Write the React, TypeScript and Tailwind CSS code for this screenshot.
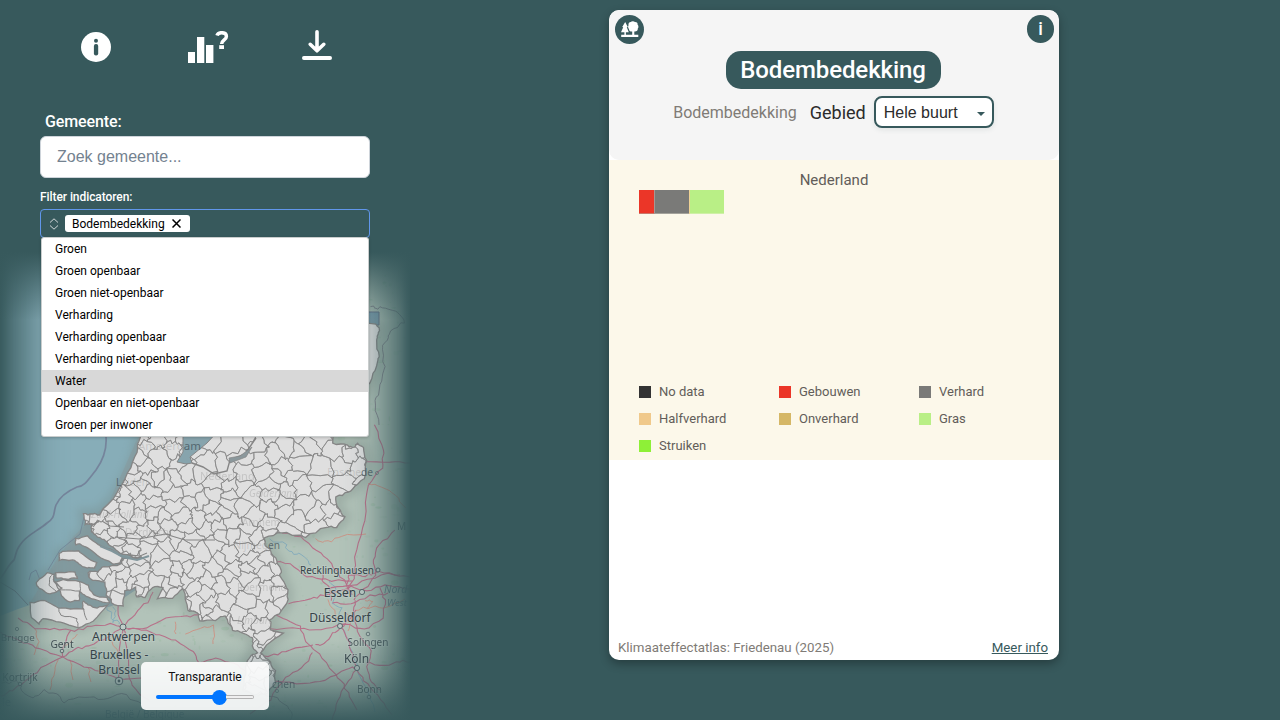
import React from "react";

type Pt = [number, number];

const MAINLAND: Pt[] = [
  [139, 425], [140, 437], [137, 452], [128, 473], [117, 493], [99, 515], [93, 514], [84, 514], [85, 524], [91, 525], [100, 522],
  [92, 524], [91, 532], [98, 537], [105, 540], [111, 547], [120, 553], [134, 557], [143, 558], [123, 558], [122, 564],
  [103, 567], [98, 571], [87, 572], [92, 580], [105, 582], [107, 595], [112, 603], [123, 607], [125, 591],
  [135, 588], [137, 597], [145, 597], [153, 587], [163, 587], [158, 598], [172, 598], [183, 589],
  [188, 610], [197, 613], [200, 621], [215, 620], [225, 615], [233, 630], [243, 633], [253, 638],
  [252, 645], [257, 652], [248, 658], [246, 668], [243, 690], [255, 696], [268, 693], [275, 683], [275, 670], [268, 660],
  [260, 653], [267, 645], [283, 633], [271, 630], [270, 620], [280, 613], [288, 600], [287, 587], [280, 576], [281, 570],
  [278, 563], [272, 553], [266, 545], [264, 538], [281, 532], [305, 537], [325, 527], [337, 527], [345, 517], [338, 508],
  [335, 497], [348, 492], [357, 485], [365, 478], [366, 460], [363, 447], [358, 443], [355, 448], [347, 445], [333, 443], [332, 425],
];
const ISLANDS: Pt[][] = [
  [[75, 539], [87, 536], [98, 545], [110, 549], [122, 557], [120, 563], [112, 564], [97, 555], [88, 548], [80, 544], [76, 545]],
  [[59, 554], [63, 551], [78, 551], [86, 557], [97, 563], [94, 568], [87, 568], [79, 564], [73, 560], [59, 560]],
  [[36, 582], [47, 573], [54, 574], [54, 582], [62, 588], [57, 592], [48, 594], [39, 588]],
  [[55, 573], [75, 572], [77, 578], [65, 579], [57, 578]],
  [[54, 582], [63, 580], [80, 581], [88, 586], [93, 595], [107, 598], [109, 603], [95, 600], [86, 596], [80, 592], [79, 600], [70, 602], [61, 596], [60, 590]],
  [[30, 603], [45, 600], [58, 608], [83, 609], [83, 601], [88, 605], [97, 608], [108, 605], [93, 621], [78, 628], [60, 622], [43, 618], [39, 624], [31, 617]],
];
const NORTHEAST: Pt[] = [[350, 322], [376, 324], [379, 328], [378, 336], [376, 342], [379, 355], [378, 362], [372, 378], [362, 395]];
const ISLAND_SPLITS: Pt[][] = [
  [[58, 608], [61, 615], [77, 618], [78, 628]], [[83, 609], [87, 620]], [[60, 590], [80, 591]], [[80, 581], [80, 592]],
  [[51, 575], [49, 585], [57, 592]],
];

function wobble([x, y]: Pt): Pt {
  return [
    x + 1.7 * Math.sin(y * 0.5 + x * 0.2) + 1.1 * Math.sin(y * 1.4 - x * 1.1),
    y + 1.7 * Math.sin(x * 0.55 - y * 0.3) + 1.1 * Math.sin(x * 1.3 + y * 1.1),
  ];
}

function rough(poly: Pt[], closed = true, amount = 0.6): string {
  const out: Pt[] = [];
  poly.forEach((a, i) => {
    if (!closed && i === poly.length - 1) {
      out.push(a);
      return;
    }
    const b = poly[(i + 1) % poly.length];
    for (let k = 0; k < 4; k++) {
      const p: Pt = [a[0] + ((b[0] - a[0]) * k) / 4, a[1] + ((b[1] - a[1]) * k) / 4];
      const w = wobble(p);
      out.push([p[0] + (w[0] - p[0]) * amount, p[1] + (w[1] - p[1]) * amount]);
    }
  });
  return "M" + out.map((p) => `${p[0].toFixed(1)} ${p[1].toFixed(1)}`).join("L") + (closed ? "Z" : "");
}

function random(seed: number) {
  let s = seed;
  return () => {
    s = (s * 16807) % 2147483647;
    return s / 2147483647;
  };
}

/** Municipality cells: a Voronoi partition whose density is higher in the west. */
function municipalities(): string {
  const rnd = random(4271);
  const seeds: Pt[] = [];
  for (let n = 0; n < 2200; n++) {
    const x = 75 + rnd() * 305;
    const y = 420 + rnd() * 285;
    let gap = 9.5;
    if (x > 235 && y < 535) gap = 13.5;
    if (x < 150 && y < 535) gap = 7;
    if (y > 555 && x > 195) gap = 10.5;
    gap *= 0.65 + rnd() * 1.15;
    if (x > 188 && x < 245 && y < 468) gap = 26;
    if (seeds.every((s) => Math.hypot((s[0] - x) * 0.9, (s[1] - y) * 1.25) > gap)) seeds.push([x, y]);
  }
  return seeds
    .map((s) => {
      let poly: Pt[] = [[s[0] - 40, s[1] - 40], [s[0] + 40, s[1] - 40], [s[0] + 40, s[1] + 40], [s[0] - 40, s[1] + 40]];
      for (const t of seeds) {
        if (t === s || Math.hypot(t[0] - s[0], t[1] - s[1]) > 80) continue;
        const nx = t[0] - s[0];
        const ny = t[1] - s[1];
        const c = (nx * (t[0] + s[0]) + ny * (t[1] + s[1])) / 2;
        const next: Pt[] = [];
        poly.forEach((a, i) => {
          const b = poly[(i + 1) % poly.length];
          const da = a[0] * nx + a[1] * ny - c;
          const db = b[0] * nx + b[1] * ny - c;
          if (da <= 0) next.push(a);
          if (da * db < 0) {
            const k = da / (da - db);
            next.push([a[0] + (b[0] - a[0]) * k, a[1] + (b[1] - a[1]) * k]);
          }
        });
        poly = next;
      }
      return rough(poly, true, 0.95);
    })
    .join("");
}

const MAIN_PATH = rough(MAINLAND, true, 0.35) + rough(NORTHEAST, true, 0.3);
const COUNTRY = MAIN_PATH + ISLANDS.map((p) => rough(p, true, 0.25)).join("");
const CELLS = municipalities();

const PATCHES = (() => {
  const rnd = random(977);
  return Array.from({ length: 620 }, () => ({
    x: rnd() * 410,
    y: 250 + rnd() * 470,
    rx: 0.8 + rnd() * rnd() * 4,
    ry: 0.6 + rnd() * rnd() * 2.6,
    o: 0.12 + rnd() * 0.3,
  }));
})();

const MOTORWAYS: Pt[][] = [
  [[123, 627], [110, 624], [92, 626], [75, 631], [55, 629], [35, 628], [18, 618]],
  [[123, 627], [108, 637], [88, 646], [75, 649], [62, 657], [45, 665], [30, 678], [12, 690], [0, 696]],
  [[62, 657], [40, 649], [24, 643], [0, 632]],
  [[62, 657], [85, 667], [105, 673], [119, 680], [142, 678]],
  [[62, 657], [65, 643], [71, 630]],
  [[123, 627], [119, 648], [118, 680]],
  [[123, 627], [128, 652], [129, 680], [137, 692], [150, 702]],
  [[123, 627], [142, 630], [160, 635], [181, 643], [193, 652], [199, 663]],
  [[123, 627], [134, 614], [148, 602], [153, 592]],
  [[123, 627], [117, 610], [119, 603]],
  [[128, 629], [147, 628], [166, 618], [187, 616], [200, 615]],
  [[199, 663], [215, 658], [238, 665], [250, 675], [262, 693]],
  [[281, 532], [300, 537], [316, 550], [331, 563], [344, 580], [352, 595]],
  [[271, 560], [290, 564], [308, 577], [325, 580], [352, 581]],
  [[375, 425], [383, 450], [382, 468], [368, 485], [365, 520], [356, 550], [354, 578], [345, 596]],
  [[365, 462], [390, 462], [410, 463]],
  [[396, 530], [378, 545], [373, 560], [376, 575], [364, 590], [354, 600]],
  [[288, 603], [310, 599], [325, 595], [344, 590], [362, 582], [388, 574], [410, 577]],
  [[269, 613], [282, 618], [300, 626], [306, 641], [315, 650], [330, 668], [341, 680], [350, 696], [357, 710]],
  [[270, 629], [300, 628], [320, 630], [345, 624], [365, 630], [383, 618], [385, 600], [380, 588]],
  [[315, 645], [325, 644], [332, 634], [344, 626], [356, 610]],
  [[250, 657], [275, 655], [290, 650], [313, 645]],
  [[313, 652], [302, 668], [285, 678], [270, 699], [250, 714]],
  [[275, 681], [304, 684], [325, 680], [346, 669], [357, 667]],
  [[331, 600], [330, 590], [322, 580], [323, 573]],
  [[341, 626], [348, 640], [352, 655], [357, 669], [367, 684], [381, 700], [392, 715]],
  [[355, 600], [353, 615], [360, 636], [372, 651], [367, 666], [371, 682], [380, 690]],
  [[357, 669], [345, 685], [338, 700], [332, 720]],
  [[366, 663], [384, 666], [399, 661], [410, 662]],
  [[325, 588], [350, 586], [367, 591], [386, 585], [410, 589]],
  [[333, 602], [350, 604], [369, 596], [388, 593]],
  [[347, 585], [349, 575], [365, 576], [379, 572], [400, 575]],
];
const ROADS: Pt[][] = [
  [[35, 628], [38, 642], [34, 655]], [[58, 660], [53, 675], [50, 690]], [[71, 660], [73, 680]],
  [[88, 668], [91, 682]], [[110, 637], [118, 653]], [[175, 622], [176, 634]], [[185, 634], [200, 628], [214, 626], [213, 644]],
  [[315, 540], [328, 542], [342, 536], [366, 534]], [[78, 634], [65, 646]], [[250, 657], [260, 652]],
  [[345, 610], [352, 620], [348, 631]], [[327, 600], [333, 607], [337, 619]], [[365, 600], [374, 602], [367, 608]],
  [[356, 610], [371, 607], [386, 608], [405, 599]], [[367, 483], [382, 486], [395, 495], [406, 508]],
];
const RIVERS: Pt[][] = [
  [[271, 540], [286, 545], [290, 552], [303, 555], [311, 565]],
  [[329, 578], [335, 588], [332, 602], [340, 609], [339, 624], [347, 636], [351, 648], [357, 667], [366, 688], [375, 712]],
  [[107, 606], [113, 618], [119, 624]], [[112, 609], [117, 616], [112, 622]],
];
const BORDERS: Pt[][] = [
  [[0, 683], [18, 681], [22, 691], [34, 698], [43, 691], [57, 694], [64, 702], [84, 696], [104, 700], [121, 693], [142, 704]],
  [[265, 693], [280, 700], [292, 712], [290, 720]],
  [[370, 307], [378, 308], [389, 308], [400, 315], [405, 322], [391, 331], [386, 340], [382, 350], [384, 370], [379, 390], [375, 405], [379, 425]],
];
const SEA_LIMIT = "M106 437C107 449 103 460 96 470C88 480 84 487 77 487C70 490 60 496 56 505C53 513 56 517 47 523C38 531 26 535 20 545C16 550 16 555 14 560C8 565 7 570 0 579";

interface Place {
  name: string;
  x: number;
  y: number;
  size: number;
  opacity?: number;
  dot?: Pt;
  r?: number;
}
const PLACES: Place[] = [
  { name: "Antwerpen", x: 123.5, y: 641, size: 12.2, dot: [123, 627], r: 3 },
  { name: "Bruxelles -", x: 119, y: 658.5, size: 12 },
  { name: "Brussel", x: 119, y: 674, size: 12, dot: [119, 681], r: 3.8 },
  { name: "Gent", x: 62, y: 647.5, size: 10.2, opacity: 0.9, dot: [62, 651], r: 1.8 },
  { name: "Brugge", x: 17.8, y: 641, size: 9.8, opacity: 0.7, dot: [17, 629], r: 1.6 },
  { name: "Kortrijk", x: 20, y: 680.5, size: 10.2, opacity: 0.75, dot: [20, 684], r: 1.8 },
  { name: "Recklinghausen", x: 337, y: 573.5, size: 10, dot: [378, 570], r: 2 },
  { name: "Essen", x: 340, y: 597, size: 12, dot: [362, 592], r: 2.6 },
  { name: "Düsseldorf", x: 340, y: 621.5, size: 12, dot: [340, 626], r: 2.5 },
  { name: "Solingen", x: 368, y: 646, size: 10, opacity: 0.8, dot: [368, 634], r: 1.8 },
  { name: "Köln", x: 356.5, y: 663, size: 12, opacity: 0.95, dot: [357, 668], r: 2.6 },
  { name: "Bonn", x: 369.5, y: 693, size: 10, opacity: 0.75, dot: [369, 697], r: 1.8 },
];

/** A name that runs across the country's edge: pale over the country, dark outside it. */
function SplitLabel({ x, y, size, pale, dark, end }: { x: number; y: number; size: number; pale: string; dark: string; end?: boolean }) {
  return (
    <text x={x} y={y} fontSize={size} textAnchor={end ? "end" : "start"}>
      {end && <tspan fill="#777" fillOpacity=".25">{pale}</tspan>}
      <tspan fill="#42515a" fillOpacity=".75">{dark}</tspan>
      {!end && <tspan fill="#777" fillOpacity=".25">{pale}</tspan>}
    </text>
  );
}

function BaseMap() {
  return (
    <svg className="block h-full w-full" viewBox="0 240 410 480" fontFamily="'Noto Sans', sans-serif">
      <defs>
        <clipPath id="mainland"><path d={MAIN_PATH} /></clipPath>
        <filter id="glow" x="-10%" y="-10%" width="120%" height="120%"><feGaussianBlur stdDeviation="5" /></filter>
      </defs>
      <rect y="240" width="410" height="480" fill="#87adb8" />
      <path d="M350 240H410V720H0V616L18 609L30 605L60 618L100 606L112 600L135 585L200 440L350 425Z" fill="#b2c3b9" />
      <path d="M30 603L50 570L70 540L110 500L138 437H180V560L112 606L90 612Z" fill="#8aa5ad" />
      {PATCHES.filter((p) => p.x > 275 || p.y > 628 || (p.y > 605 && p.x > 125)).map((p, i) => (
        <ellipse key={i} cx={p.x} cy={p.y} rx={p.rx} ry={p.ry} fill="#91b89a" opacity={p.o} />
      ))}
      <path d={SEA_LIMIT} fill="none" stroke="#707994" strokeWidth="1.7" opacity=".8" />
      <path d="M84 517L80 534L60 550L48 570M29 580L31 573L36 570L40 580" fill="none" stroke="#72859d" strokeWidth=".8" />
      <path d="M0 582L15 591L28 605" fill="none" stroke="#6f7d8e" strokeWidth="1" />
      <path d="M368 312H379V325H368Z" fill="#7c9fb1" stroke="#68728b" strokeWidth="1" />
      {RIVERS.map((r, i) => <path key={i} d={rough(r, false, 0.8)} fill="none" stroke="#86adbc" strokeWidth="1" />)}
      {ROADS.map((r, i) => <path key={i} d={rough(r, false, 0.5)} fill="none" stroke="#cf9182" strokeWidth=".9" />)}
      {BORDERS.map((r, i) => <path key={i} d={rough(r, false, 0.6)} fill="none" stroke="#77717f" strokeWidth="1" opacity=".75" />)}
      {MOTORWAYS.map((r, i) => <path key={i} d={rough(r, false, 0.45)} fill="none" stroke="#b8718a" strokeWidth="1.1" />)}
      <path d={COUNTRY} fill="none" stroke="#71807c" strokeWidth="10" opacity=".32" filter="url(#glow)" />
      <path d={COUNTRY} fill="#dfdfdf" />
      <g clipPath="url(#mainland)">
        <path d={CELLS} fill="none" stroke="#858585" strokeWidth=".75" strokeLinejoin="round" />
        <path d="M183 430V452L177 462L186 464L192 463L190 457L207 443L219 430Z" fill="#87a4ad" stroke="#858585" />
        <path d="M192 463L203 467L214 474L227 471L230 460L245 454L256 438" fill="none" stroke="#858585" strokeWidth="1.4" />
        <path d="M229 458L240 456L252 447L246 457L230 463Z" fill="#8b989c" stroke="#858585" strokeWidth=".7" />
        <g fill="#777" opacity=".25">
          <text x="91" y="518" fontSize="10" fontStyle="italic">Zuid-Holland</text>
          <text x="125" y="536" fontSize="10">Dordrecht</text>
          <text x="200" y="480" fontSize="11">Nederland</text>
          <text x="249" y="497" fontSize="10" fontStyle="italic">Gelderland</text>
          <text x="242" y="526" fontSize="10">Arnhem</text>
          <text x="237" y="591" fontSize="10">Roermond</text>
          <text x="237" y="624" fontSize="10" fontStyle="italic">Limburg</text>
        </g>
      </g>
      {ISLAND_SPLITS.map((r, i) => <path key={i} d={rough(r, false, 0.3)} fill="none" stroke="#858585" strokeWidth="1" />)}
      <path d={COUNTRY} fill="none" stroke="#858585" strokeWidth="1.3" />
      <path d="M100 546L112 551L123 557L137 560L149 556" fill="none" stroke="#80959b" strokeWidth="2" />
      <path d="M102 521L110 526L124 527M122 554L140 556L147 553M115 537L139 539L165 534L185 540L215 540" fill="none" stroke="#858585" strokeWidth="1.1" />
      <SplitLabel x={201} y={450} size={11.5} pale="Amsterd" dark="am" end />
      <SplitLabel x={373} y={476} size={10.2} pale="Ensche" dark="de" end />
      <SplitLabel x={280} y={549} size={10.2} pale="Nijmeg" dark="en" end />
      <SplitLabel x={116} y={486} size={10.2} pale="eiden" dark="L" />
      <g fill="#42515a" fontSize="10.2" opacity=".75">
        <text x="272" y="687.5">chen</text>
        <text x="397" y="530">M</text>
        <circle cx="377" cy="473" r="1.6" fill="none" stroke="#52666b" strokeWidth=".7" />
        <circle cx="277" cy="691" r="1.6" fill="none" stroke="#52666b" strokeWidth=".7" />
      </g>
      <g fill="#5b7381" fontStyle="italic" fontSize="10.5" opacity=".8">
        <text x="384" y="593">Nord</text>
        <text x="387" y="606" fontSize="9.5">West</text>
        <text x="105" y="717.5" fontSize="10" fontStyle="normal">België / Belgique</text>
        <text x="2" y="706" fontSize="11" fontStyle="normal">le</text>
      </g>
      {PLACES.map((p) => (
        <g key={p.name} opacity={p.opacity ?? 1}>
          {p.dot && <circle cx={p.dot[0]} cy={p.dot[1]} r={p.r} fill="#c0cdc8" stroke="#4e5e63" strokeWidth=".9" />}
          {p.name === "Brussel" && <circle cx="119" cy="681" r="1.4" fill="#4e5e63" />}
          <text x={p.x} y={p.y} fontSize={p.size} textAnchor="middle" fill="#364248" stroke="#c3d0cb" strokeOpacity=".5" strokeWidth="2" paintOrder="stroke">{p.name}</text>
        </g>
      ))}
    </svg>
  );
}

function InfoIcon() {
  return (
    <svg className="size-[30px]" viewBox="0 0 30 30">
      <circle cx="15" cy="15" r="15" fill="#fff" />
      <circle cx="15" cy="8.7" r="2" fill="#37595c" />
      <rect x="12.9" y="12" width="4.3" height="11.5" rx="2" fill="#37595c" />
    </svg>
  );
}

function ChartQuestionIcon() {
  return (
    <svg className="h-8 w-[41px]" viewBox="0 0 41 32">
      <path d="M0 21h7v11H0zM9 6h7.3v26H9zM18 14h7.4v18H18z" fill="#fff" />
      <path d="M29 4.6C29.6 2.5 31.5 1.7 33.6 1.7c2.9 0 4.8 1.4 4.8 3.7 0 3.4-4.7 3.6-4.8 7.6" fill="none" stroke="#fff" strokeWidth="3.5" />
      <path d="M31.2 14.2h4.8V18h-4.8z" fill="#fff" />
    </svg>
  );
}

function DownloadIcon() {
  return (
    <svg className="h-[30px] w-[30px]" viewBox="0 0 30 30" fill="none" stroke="#fff" strokeLinecap="round" strokeLinejoin="round">
      <path d="M15 1.8v18.5M8.2 14.3l6.8 6.5 6.8-6.5" strokeWidth="3.6" />
      <path d="M1.9 28h26.2" strokeWidth="3.8" />
    </svg>
  );
}

function TreesIcon() {
  return (
    <svg className="size-[29px]" viewBox="0 0 29 29">
      <circle cx="14.5" cy="14.5" r="14.5" fill="#37595c" />
      <path
        d="M10.2 7l2.6 5-1 .3 2 5h-2.9v2.5h6.3v-3.2c-2 .1-3.4-1-3.2-2.7-1-.9-1.2-2.4-.5-3.4-.3-2.1.6-3.4 2.2-3.5.9-1 3.4-1 4.2 0 2-.1 3 1.1 2.7 2.7 1.1 1 1.1 2.8.2 3.7.2 2.1-1.4 3.3-3.5 3v3.4h4v2.1H6.2v-2.1h3.2v-2.5H6l2.2-5-1-.3z"
        fill="#fff"
      />
    </svg>
  );
}

const OPTIONS = ["Groen", "Groen openbaar", "Groen niet-openbaar", "Verharding", "Verharding openbaar", "Verharding niet-openbaar", "Water", "Openbaar en niet-openbaar", "Groen per inwoner"];

const LEGEND = [
  { label: "No data", color: "bg-[#333333]" },
  { label: "Gebouwen", color: "bg-[#eb3628]" },
  { label: "Verhard", color: "bg-[#7a7a78]" },
  { label: "Halfverhard", color: "bg-[#f0c98b]" },
  { label: "Onverhard", color: "bg-[#d5b766]" },
  { label: "Gras", color: "bg-[#b9ef86]" },
  { label: "Struiken", color: "bg-[#8ef037]" },
];

function Sidebar() {
  return (
    <aside className="relative h-full w-[410px] shrink-0">
      <div className="absolute inset-x-0 top-60 h-[480px] overflow-hidden">
        <BaseMap />
        <div className="absolute inset-x-0 -top-6 -bottom-1 shadow-[inset_0_0_40px_22px_#37595c,inset_0_0_10px_3px_#37595c]" />
        <div className="absolute inset-x-0 top-0 h-20 bg-linear-to-b from-[#37595c] from-15% to-[#37595c]/0" />
        <div className="absolute inset-x-0 bottom-0 h-20 bg-linear-to-b from-[#37595c]/0 to-[#37595c]/60" />
      </div>
      <div className="relative flex h-full flex-col">
        <nav className="flex h-[110px] shrink-0 items-start">
          <button className="mt-8 ml-[81px]"><InfoIcon /></button>
          <button className="mt-[31px] ml-[77px]"><ChartQuestionIcon /></button>
          <button className="mt-[30px] ml-[73px]"><DownloadIcon /></button>
        </nav>
        <div className="w-[370px] shrink-0 pl-10">
          <label className="block h-[26px] pl-[5px] text-base leading-[23px] font-medium tracking-[-0.1px] text-white">Gemeente:</label>
          <input
            className="block h-[42px] w-[330px] rounded-md border border-[#ced4da] bg-white px-4 font-['Liberation_Sans',sans-serif] text-base text-black placeholder:text-[#748290]"
            placeholder="Zoek gemeente..."
          />
          <div className="h-[31px] pt-[11px] text-xs leading-4 font-medium tracking-[-0.07px] text-white">Filter indicatoren:</div>
          <div className="flex h-[29px] items-center rounded border border-[#6096ea] bg-[#37595c] pl-2">
            <svg className="h-3 w-2.5" viewBox="0 0 10 12" fill="none" stroke="#d0d7d8" strokeWidth="1">
              <path d="M1 4.5L5 .8l4 3.7M1 7.5l4 3.7 4-3.7" />
            </svg>
            <span className="ml-1.5 flex h-[17px] w-[125px] items-center rounded-[3px] bg-white pl-[7px] text-xs text-black">
              Bodembedekking
              <svg className="ml-[7px] size-[9px]" viewBox="0 0 9 9" stroke="#000" strokeWidth="1.5"><path d="M.5.5l8 8M8.5.5l-8 8" /></svg>
            </span>
          </div>
          <ul className="mx-px -mt-px h-[200px] overflow-hidden rounded-[3px] border border-[#c9cdcd] bg-white shadow-[0_1px_3px_#0003]">
            {OPTIONS.map((option) => (
              <li key={option} className={option === "Water" ? "h-[22px] bg-[#d8d8d8] pl-[13px] text-xs leading-[22px] text-black" : "h-[22px] pl-[13px] text-xs leading-[22px] text-black"}>
                {option}
              </li>
            ))}
          </ul>
        </div>
        <div className="mt-auto mb-2.5 ml-[141px] h-12 w-32 rounded-[5px] bg-white/90 pt-[7px] text-center text-xs leading-4 text-[#111]">
          Transparantie
          <div className="mx-[15px] mt-1 flex h-4 items-center">
            <span className="h-1 w-[57px] rounded-l bg-[#0075ff]" />
            <span className="-mr-px -ml-px size-[15px] shrink-0 rounded-full bg-[#0075ff]" />
            <span className="h-1 flex-1 rounded-r border border-l-0 border-[#b2b2b2] bg-[#efefef]" />
          </div>
        </div>
      </div>
    </aside>
  );
}

function IndicatorCard() {
  return (
    <section className="mt-2.5 ml-[199px] flex h-[650px] w-[450px] flex-col overflow-hidden rounded-[10px] bg-white shadow-[0_4px_10px_#0000004d]">
      <header className="flex h-[150px] shrink-0 flex-col items-center rounded-[10px] bg-[#f5f5f5]">
        <div className="flex h-[41px] w-full items-start justify-between pt-[5px] pr-[5px] pl-1.5">
          <TreesIcon />
          <button className="flex h-7 w-[27px] items-center justify-center rounded-full bg-[#37595c] text-lg leading-none font-medium text-white">i</button>
        </div>
        <h1 className="mr-0.5 h-[38px] w-[215px] rounded-[15px] bg-[#37595c] text-center text-2xl leading-[38px] font-medium tracking-[-0.1px] text-white">Bodembedekking</h1>
        <div className="mt-[7px] mr-px flex h-8 items-center">
          <span className="pt-0.5 text-base text-[#807b76]">Bodembedekking</span>
          <span className="ml-[13px] pt-0.5 text-lg text-[#2b2b2b]">Gebied</span>
          <span className="ml-2 flex h-8 w-[120px] items-center justify-between rounded-lg border-2 border-[#37595c] bg-white pr-[7px] pl-2 font-['Liberation_Sans',sans-serif] text-base text-[#2b2b2b] shadow-[0_2px_5px_#37595c1a]">
            <span className="pt-0.5">Hele buurt</span>
            <svg className="mt-[3px] h-1 w-2" viewBox="0 0 8 4"><path d="M0 0h8L4 4z" fill="#37595c" /></svg>
          </span>
        </div>
      </header>
      <div className="flex h-[300px] shrink-0 flex-col bg-[#fcf8ea] px-[30px]">
        <div className="h-[30px] pt-2.5 text-center text-[15px] leading-5 text-[#625d59]">Nederland</div>
        <div className="flex h-6">
          <div className="w-[15px] border-b border-b-[#c9776a] bg-[#eb3628]" />
          <div className="w-px bg-[#a69792]" />
          <div className="w-[34px] border-b border-b-[#a3a29b] bg-[#7a7a78]" />
          <div className="w-px bg-[#efd395]" />
          <div className="w-[34px] border-b border-b-[#cff0a7] bg-[#b9ef86]" />
        </div>
        <ul className="mt-auto grid h-[82px] auto-rows-[27px] grid-cols-[140px_140px_1fr]">
          {LEGEND.map((item) => (
            <li key={item.label} className="flex items-center gap-2 text-[13px] text-[#625d59]">
              <span className={item.color + " size-3"} />
              {item.label}
            </li>
          ))}
        </ul>
      </div>
      <footer className="mt-auto flex h-[25px] items-center justify-between pr-[11px] pl-[9px] text-[13.3px] leading-5">
        <span className="text-[#807b76]">Klimaateffectatlas: Friedenau (2025)</span>
        <a className="text-[#37595c] underline">Meer info</a>
      </footer>
    </section>
  );
}

export default function App() {
  return (
    <main className="flex h-[720px] w-[1280px] overflow-hidden bg-[#37595c] font-['Roboto',sans-serif]">
      <Sidebar />
      <IndicatorCard />
    </main>
  );
}
